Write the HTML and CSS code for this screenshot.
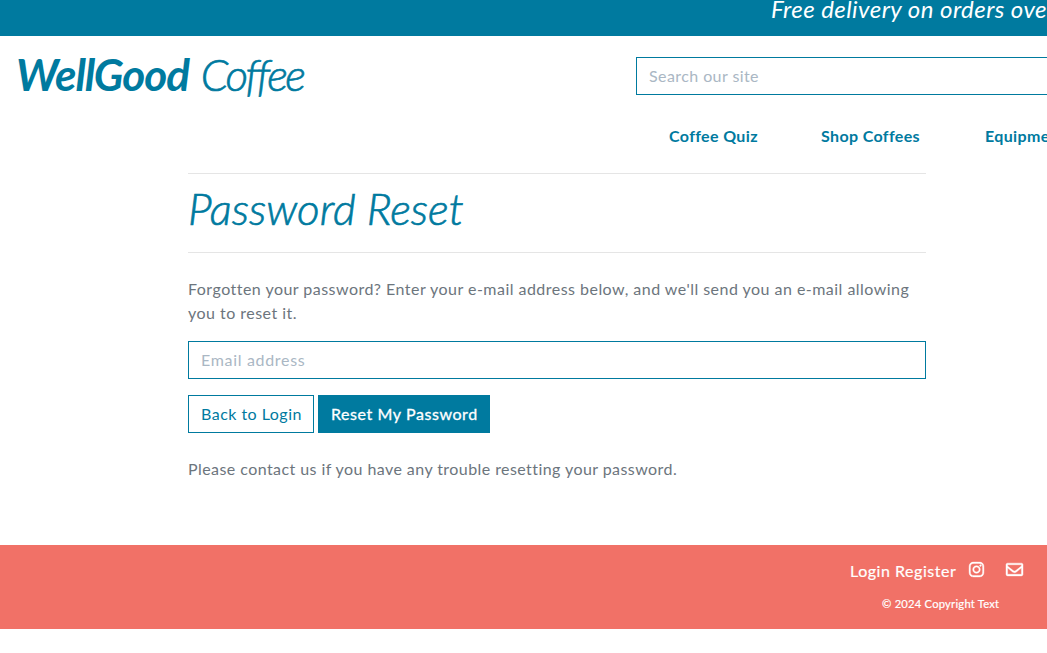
FILE: index.html
```
<!DOCTYPE html>
<html lang="en">
<head>
<meta charset="utf-8">
<title>WellGood Coffee - Password Reset</title>
<link rel="stylesheet" href="styles.css">
</head>
<body>
<div class="banner"><span class="banner-text">Free delivery on orders over £50</span></div>
<header class="header">
  <a class="logo"><span class="logo-bold">WellGood</span><span class="logo-light">Coffee</span></a>
  <div class="header-tools">
    <input class="field search" type="text" placeholder="Search our site">
    <nav class="nav"><a class="nav-quiz">Coffee Quiz</a><a class="nav-shop">Shop Coffees</a><a>Equipment</a></nav>
  </div>
</header>
<main class="content">
  <hr>
  <h1 class="title">Password Reset</h1>
  <hr>
  <p class="intro">Forgotten your password? Enter your e-mail address below, and we'll send you an e-mail allowing<br>you to reset it.</p>
  <input class="field email" type="email" placeholder="Email address">
  <div class="actions"><a class="btn btn-outline">Back to Login</a><button class="btn btn-solid">Reset My Password</button></div>
  <p class="help">Please contact us if you have any trouble resetting your password.</p>
</main>
<footer class="footer">
  <div class="footer-links">
    <span class="account">Login Register</span>
    <svg class="icon instagram" viewBox="0 0 448 512" fill="currentColor"><path d="M224.100 141c-63.600 0-114.900 51.300-114.900 114.900s51.300 114.900 114.900 114.900S339 319.500 339 255.900 287.700 141 224.100 141zm0 189.600c-41.100 0-74.700-33.500-74.700-74.700s33.500-74.700 74.700-74.700 74.700 33.500 74.700 74.700-33.600 74.700-74.700 74.700zm146.400-194.300c0 14.900-12 26.800-26.800 26.800-14.900 0-26.800-12-26.800-26.800s12-26.800 26.800-26.800 26.800 12 26.800 26.800zm76.100 27.200c-1.700-35.900-9.900-67.700-36.200-93.900-26.200-26.200-58-34.400-93.900-36.200-37-2.100-147.900-2.100-184.900 0-35.800 1.700-67.600 9.900-93.900 36.100s-34.400 58-36.200 93.900c-2.100 37-2.100 147.900 0 184.900 1.700 35.900 9.900 67.700 36.200 93.900s58 34.400 93.900 36.200c37 2.100 147.900 2.100 184.900 0 35.900-1.700 67.700-9.900 93.900-36.200 26.200-26.200 34.400-58 36.200-93.900 2.100-37 2.100-147.800 0-184.800zM398.800 388c-7.800 19.600-22.900 34.700-42.600 42.600-29.500 11.700-99.500 9-132.100 9s-102.700 2.600-132.100-9c-19.600-7.800-34.700-22.900-42.600-42.600-11.700-29.500-9-99.500-9-132.100s-2.600-102.700 9-132.100c7.800-19.600 22.900-34.700 42.600-42.600 29.500-11.700 99.500-9 132.100-9s102.700-2.600 132.100 9c19.600 7.800 34.700 22.900 42.600 42.600 11.700 29.500 9 99.500 9 132.100s2.700 102.700-9 132.100z"/></svg>
    <svg class="icon mail" viewBox="0 0 512 512" fill="currentColor"><path d="M464 64H48C21.490 64 0 85.490 0 112v288c0 26.510 21.490 48 48 48h416c26.510 0 48-21.490 48-48V112c0-26.510-21.490-48-48-48zm0 48v40.805c-22.422 18.259-58.168 46.651-134.587 106.490-16.841 13.247-50.201 45.072-73.413 44.701-23.208.375-56.579-31.459-73.413-44.701C106.180 199.465 70.425 171.067 48 152.805V112h416zM48 400V214.398c22.914 18.251 55.409 43.862 104.938 82.646 21.857 17.205 60.134 55.186 103.062 54.955 42.717.231 80.509-37.199 103.053-54.947 49.528-38.783 82.032-64.401 104.947-82.653V400H48z"/></svg>
  </div>
  <p class="copyright">© 2024 Copyright Text</p>
</footer>
</body>
</html>
```
FILE: styles.css
```
* { box-sizing: border-box; }
body {
  margin: 0;
  overflow: hidden;
  background: #fff;
  color: #6c757d;
  font: 400 16px/24px Lato, "Open Sans", sans-serif;
  white-space: nowrap;
}
.banner {
  height: 36px;
  padding-left: 771px;
  overflow: hidden;
  background: #007a9f;
  color: #fff;
  font: italic 400 24px/36px Lato, sans-serif;
}
.banner-text { display: block; margin-top: -9px; letter-spacing: .45px; }
.header { display: flex; height: 137px; color: #007a9f; }
.logo { width: 636px; flex: none; padding: 10px 0 0 16px; font: italic 700 44px/56px Lato, sans-serif; }
.logo-bold { letter-spacing: -1.1px; }
.logo-light { margin-left: 12px; font-weight: 300; letter-spacing: -2.3px; -webkit-text-stroke: .7px #007a9f; }
.header-tools { flex: none; width: 500px; padding-top: 21px; }
.field {
  display: block;
  width: 100%;
  height: 38px;
  margin: 0;
  padding: 5px 12px 7px;
  border: 1px solid #007a9f;
  border-radius: 0;
  background: #fff;
  font: inherit;
  letter-spacing: .42px;
}
.email { letter-spacing: .68px; }
.field::placeholder { color: #aab7c4; opacity: 1; }
.nav { display: flex; padding: 29px 0 0 33px; font-weight: 700; letter-spacing: .36px; }
.nav-quiz { width: 152px; }
.nav-shop { width: 164px; }
.content { width: 738px; height: 372px; margin-left: 188px; }
hr { height: 1px; margin: 0; border: 0; background: #e5e5e5; }
.title { height: 78px; margin: 0; padding-top: 7px; color: #007a9f; font: italic 300 44px/54px Lato, sans-serif; -webkit-text-stroke: .7px #007a9f; }
.intro { margin: 24px 0 16px; letter-spacing: .47px; }
.actions { display: flex; gap: 4px; margin-top: 16px; }
.btn { height: 38px; padding: 6px 12px; border: 1px solid #007a9f; color: #007a9f; font: inherit; text-align: left; }
.btn-outline { width: 126px; letter-spacing: .48px; }
.btn-solid { width: 172px; background: #007a9f; color: #fff; letter-spacing: .58px; -webkit-text-stroke: .3px #fff; }
.help { margin: 24px 0 0; letter-spacing: .43px; }
.footer { height: 84px; padding: 14px 0 0 850px; background: #f17167; color: #fff; }
.footer-links { display: flex; }
.account { width: 119px; letter-spacing: .53px; -webkit-text-stroke: .2px #fff; }
.icon { stroke: currentColor; stroke-width: 12; overflow: visible; }
.instagram { width: 15px; height: 17px; margin-top: 2px; }
.mail { width: 17px; height: 17px; margin: 2px 0 0 22px; }
.copyright { margin: 9px 0 0 32px; font-size: 11.2px; letter-spacing: .23px; -webkit-text-stroke: .2px #fff; }
```
